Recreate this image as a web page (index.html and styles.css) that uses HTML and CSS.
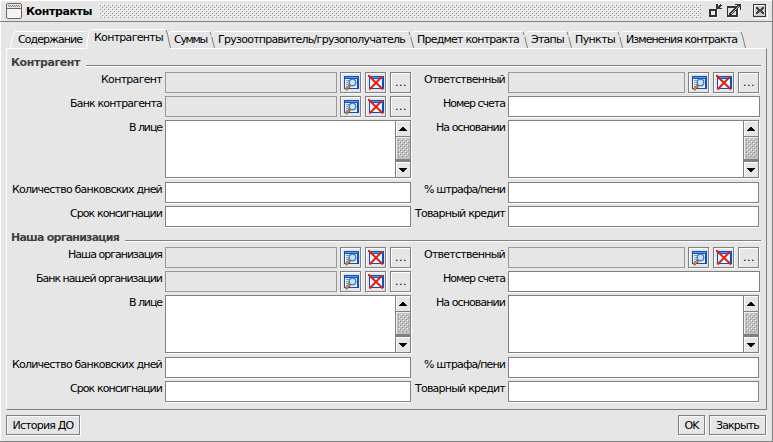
FILE: index.html
```html
<!DOCTYPE html>
<html lang="ru">
<head>
<meta charset="utf-8">
<title>Контракты</title>
<link rel="stylesheet" href="styles.css">
</head>
<body>
<svg class="defs" aria-hidden="true">
  <defs>
    <pattern id="grain" width="4" height="4" patternUnits="userSpaceOnUse">
      <path fill="#fff" d="M0 0h1v1h-1zM2 2h1v1h-1z"/><path fill="#8c8c8c" d="M1 1h1v1h-1zM3 3h1v1h-1z"/>
    </pattern>
    <symbol id="lookup" viewBox="0 0 16 16">
      <path fill="#0a4fc4" d="M1 1h15v13H1z"/><path fill="#5b9cf0" d="M2 2h13v1H2z"/>
      <path fill="#eef4fb" d="M2 4h12v9H2z"/><path stroke="#8c96a3" d="M3 5.500h4M3 7.500h3M3 9.500h3M3 11.500h3"/>
      <circle cx="9.500" cy="7.500" r="3.300" fill="#c3e4fb" stroke="#5373a4" stroke-width="1.300"/>
      <path stroke="#7e4a20" stroke-width="2.600" d="M7 10.700L2.700 14.800"/><path stroke="#f09a3c" stroke-width="1.200" d="M6.500 11L3 14.300"/>
    </symbol>
    <symbol id="clear" viewBox="0 0 16 16">
      <path fill="#0a4fc4" d="M1 1h15v13H1z"/><path fill="#5b9cf0" d="M2 2h13v1H2z"/>
      <path fill="#eef4fb" d="M2 4h12v9H2z"/>
      <path stroke="#e2200e" stroke-width="2" d="M0 0L15 14.500M14 1.500L1.500 14.500"/>
    </symbol>
  </defs>
</svg>
<div class="window">
  <header class="titlebar">
    <svg class="app-icon" width="16" height="16" shape-rendering="crispEdges"><path fill="#666" d="M1 0h14v1h1v14h-1v1H1v-1H0V1h1z"/><path fill="#e6e6e6" d="M1 1h14v4H1z"/><path fill="#f4f4f4" d="M1 6h14v9H1z"/><path stroke="#777" stroke-dasharray="1 1" d="M2 2.500h12M3 3.500h11"/></svg>
    <span class="title" data-w="66">Контракты</span>
    <svg class="grip" width="602" height="14"><rect width="602" height="14" fill="url(#grain)"/></svg>
    <svg class="controls" width="60" height="18" shape-rendering="crispEdges">
      <path fill="none" stroke="#fff" d="M2 16.500h7.500V9M20 16.500h10.500V6M46 17.500h13.500V4"/>
      <path fill="#333" d="M1 8h8v8H1z"/><path fill="#eee" d="M3 10h4v4H3z"/>
      <path fill="#333" d="M8 3h2v2h1V4h1V3h1v1h1v1h-1v1h-1v1h2v1H8z"/>
      <path fill="#333" d="M19 5h11v11H19z"/><path fill="#ddd" d="M20 7h8v7h-8z"/>
      <path fill="#333" d="M27 3h6v6h-1V6h-1v1h-1v1h-1v1h-1v1h-1v1h-1v1h-1v1h-1v1h-3v-2h1v-1h1v-1h1V9h1V8h1V7h1V6h1V5h1V4h-2z"/>
      <path fill="#bbb" d="M23 13h1v-1h1v-1h1v-1h1V9h1V8h1V7h1V6h1V5h-1v1h-1v1h-1v1h-1v1h-1v1h-1v1h-1v1h-1z"/>
      <path fill="#ccc" stroke="#333" d="M45.500 3.500h12v12h-12z"/><path fill="none" stroke="#fff" d="M46.500 14V4.500H56"/>
      <path fill="#444" d="M48 6h2v1h1v1h2V7h1V6h2v2h-1v1h-1v1h1v1h1v2h-2v-1h-1v-1h-2v1h-1v1h-2v-2h1v-1h1V9h-1V8h-1z"/>
    </svg>
  </header>
  <nav class="tabs" id="tabs"></nav>
  <main class="panel" id="panel"></main>
  <footer class="footer">
    <button class="btn history"><span data-w="61">История ДО</span></button>
    <button class="btn ok"><span data-w="14">OK</span></button>
    <button class="btn close"><span data-w="43">Закрыть</span></button>
  </footer>
</div>
<script src="app.js"></script>
</body>
</html>
```
FILE: styles.css
```css
* { box-sizing: border-box; }
body { margin: 0; background: #e6e6e6; color: #000; font: 11px/14px "DejaVu Sans", sans-serif; overflow: hidden; }
.defs { position: absolute; width: 0; height: 0; }
svg { display: block; flex: none; }
[data-w] { display: inline-block; white-space: nowrap; }
.window { width: 773px; height: 442px; border-right: 1px solid #808080; border-bottom: 1px solid #808080; box-shadow: inset 1px 1px #fff; display: flex; flex-direction: column; }
.titlebar { display: flex; align-items: flex-start; height: 22px; border-bottom: 1px solid #808080; padding: 3px 5px 0 6px; }
.title { margin: 2px 7px 0 4px; font-weight: bold; }
.grip { margin-top: 1px; }
.controls { margin: -2px 0 0 7px; overflow: visible; }
.tabs { display: flex; height: 26px; padding: 7px 0 0 10px; }
.tab { position: relative; flex: none; height: 19px; padding: 4px 0 0 8px; }
.tab.active { padding-top: 2px; z-index: 1; }
.tab svg { position: absolute; left: 0; top: 0; overflow: visible; }
.tab span { position: relative; }
.panel { width: 761px; height: 362px; margin-left: 6px; border: 1px solid; border-color: #fff #808080 #808080 #fff; padding: 6px 5px 0 4px; }
.section { height: 175px; }
.legend { display: flex; height: 17px; color: #404040; font-weight: bold; gap: 6px; }
.legend span { margin-top: 1px; }
.legend i { flex: 1; height: 2px; margin-top: 10px; background: #808080; border-bottom: 1px solid #fff; }
.row { display: grid; grid-template-columns: 151px 3px 246px 94px 3px 252px; height: 24px; }
.row.tall { height: 62px; }
.label { display: flex; justify-content: flex-end; padding-top: 1px; }
.label span { flex: none; }
.field { display: flex; gap: 4px; }
.field.f1 { grid-column: 3; }
.field.f2 { grid-column: 6; }
.label.l1 { grid-column: 1; }
.label.l2 { grid-column: 4; }
.input { flex: 1; height: 21px; background: #fff; border: 1px solid #808080; box-shadow: 0 1px #fff; }
.f2 .input { margin-right: 1px; }
.f2 .input.wide { margin-right: 0; }
.field .input.readonly { background: #e6e6e6; border-color: #999; box-shadow: none; margin-right: -1px; }
.tool { width: 21px; height: 21px; border: 1px solid #808080; box-shadow: 1px 1px #fff, inset 1px 1px #fff; display: flex; align-items: center; justify-content: center; padding: 1px 0 0 1px; flex: none; }
.f2 .tool:last-child { margin-right: 1px; }
.dots { letter-spacing: 0.5px; }
.area { flex: 1; height: 58px; display: flex; justify-content: flex-end; background: #fff; border: 1px solid #808080; box-shadow: 1px 1px #fff; }
.f2 .area { margin-right: 1px; }
.footer { display: flex; padding: 5px 6px 0 6px; }
.btn { height: 20px; border: 1px solid #808080; background: #e6e6e6; box-shadow: 1px 1px #fff, inset 1px 1px #f8f8f8; padding: 1px 0 0; font: inherit; text-align: center; color: #000; }
.history { width: 74px; }
.ok { width: 27px; margin-left: auto; margin-right: 4px; }
.close { width: 57px; }
```
FILE: app.js
```js
const tabs = [
  ['Содержание', 64, 76],
  ['Контрагенты', 69, 80],
  ['Суммы', 33, 44],
  ['Грузоотправитель/грузополучатель', 187, 199],
  ['Предмет контракта', 102, 114],
  ['Этапы', 33, 44],
  ['Пункты', 40, 51],
  ['Изменения контракта', 111, 123]
];
document.getElementById('tabs').innerHTML = tabs.map(([text, w, step], i) => {
  const active = i === 1;
  const left = i === 0 ? 'M.5 19L1.500 13L3.500 4L5 2.500' : active ? 'M.5 19L1.500 11L3.500 2L5 .5' : 'M1 8L3.500 3.500L5 2.500';
  const top = active ? `L${step - 1} .5` : `L${step - 1} 2.500`;
  const y = active ? 1 : 3;
  const edge = i === 0 ? '' : `<path fill="none" stroke="#808080" d="M${step} ${y}L${step + 1.500} ${y + 4}L${step + 3.500} 15L${step + 4.500} 19"/>`;
  const cover = active ? `<path fill="#e6e6e6" d="M1 20V12L4 0H${step}L${step + 4} 20z"/>` : '';
  return `<div class="tab${active ? ' active' : ''}" style="width:${step}px"><svg width="${step}" height="19">${cover}<path fill="none" stroke="#fff" d="${left}${top}"/>${edge}</svg><span data-w="${w}">${text}</span></div>`;
}).join('');

const label = (n, [text, w]) => `<div class="label l${n}"><span data-w="${w}">${text}</span></div>`;
const input = (cls = '') => `<div class="input ${cls}"></div>`;
const lookup = input('readonly') +
  '<div class="tool"><svg width="16" height="16"><use href="#lookup"/></svg></div>' +
  '<div class="tool"><svg width="16" height="16"><use href="#clear"/></svg></div>' +
  '<div class="tool dots">...</div>';
const area = `<div class="area"><svg width="15" height="56" shape-rendering="crispEdges">
  <path fill="#e6e6e6" d="M0 0h15v56H0z"/><path fill="#808080" d="M0 0h1v56H0zM0 15h15v1H0zM0 38h15v3H0z"/>
  <path fill="#fff" d="M1 0h14v1H2v14H1zM1 41h14v1H2v14H1z"/>
  <path fill="#c0c0c0" d="M1 16h14v22H1z"/><path fill="#eee" d="M1 16h14v1H2v21H1z"/><rect x="3" y="18" width="11" height="18" fill="url(#grain)"/>
  <path d="M7 6h2v1h1v1h1v1h1v1H4V9h1V8h1V7h1zM4 47h8v1h-1v1h-1v1H9v1H7v-1H6v-1H5v-1H4z"/></svg></div>`;
const row = (a, fa, b, fb, cls = '') =>
  `<div class="row ${cls}">${label(1, a)}<div class="field f1">${fa}</div>${label(2, b)}<div class="field f2">${fb}</div></div>`;

const section = (title, first, bank) => `<section class="section">
  <div class="legend"><span data-w="${title[1]}">${title[0]}</span><i></i></div>
  ${row(first, lookup, ['Ответственный', 81], lookup)}
  ${row(bank, lookup, ['Номер счета', 62], input('wide'))}
  ${row(['В лице', 33], area, ['На основании', 69], area, 'tall')}
  ${row(['Количество банковских дней', 150], input(), ['% штрафа/пени', 81], input())}
  ${row(['Срок консигнации', 92], input(), ['Товарный кредит', 90], input())}
</section>`;
document.getElementById('panel').innerHTML =
  section(['Контрагент', 69], ['Контрагент', 61], ['Банк контрагента', 92]) +
  section(['Наша организация', 108], ['Наша организация', 94], ['Банк нашей организации', 126]);

// Spread the letters of each caption over its column width.
document.querySelectorAll('[data-w]').forEach(el => {
  el.style.width = 'max-content';
  const spacing = (el.dataset.w - el.getBoundingClientRect().width) / el.textContent.length;
  el.style.letterSpacing = spacing + 'px';
  el.style.width = el.dataset.w + 'px';
});
```
